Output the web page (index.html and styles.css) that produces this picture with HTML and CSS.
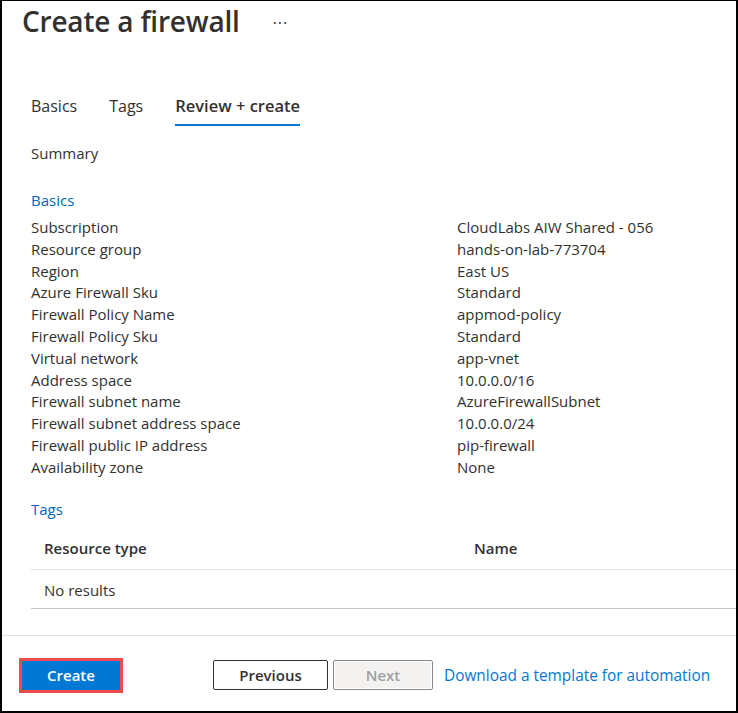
FILE: index.html
```html
<!DOCTYPE html>
<html>
<head>
<meta charset="utf-8">
<link rel="stylesheet" href="styles.css">
</head>
<body>
<div class="frame">
  <div class="main">
    <div class="title-row">
      <h1 class="title">Create a firewall</h1>
      <span class="more">···</span>
    </div>
    <div class="tabs">
      <span class="tab">Basics</span>
      <span class="tab">Tags</span>
      <span class="tab active">Review + create</span>
    </div>
    <div class="summary">Summary</div>
    <div class="section-title">Basics</div>
    <div class="props">
      <div class="prop"><span class="k">Subscription</span><span class="v">CloudLabs AIW Shared - 056</span></div>
      <div class="prop"><span class="k">Resource group</span><span class="v">hands-on-lab-773704</span></div>
      <div class="prop"><span class="k">Region</span><span class="v">East US</span></div>
      <div class="prop"><span class="k">Azure Firewall Sku</span><span class="v">Standard</span></div>
      <div class="prop"><span class="k">Firewall Policy Name</span><span class="v">appmod-policy</span></div>
      <div class="prop"><span class="k">Firewall Policy Sku</span><span class="v">Standard</span></div>
      <div class="prop"><span class="k">Virtual network</span><span class="v">app-vnet</span></div>
      <div class="prop"><span class="k">Address space</span><span class="v">10.0.0.0/16</span></div>
      <div class="prop"><span class="k">Firewall subnet name</span><span class="v">AzureFirewallSubnet</span></div>
      <div class="prop"><span class="k">Firewall subnet address space</span><span class="v">10.0.0.0/24</span></div>
      <div class="prop"><span class="k">Firewall public IP address</span><span class="v">pip-firewall</span></div>
      <div class="prop"><span class="k">Availability zone</span><span class="v">None</span></div>
    </div>
    <div class="section-title tags-title">Tags</div>
    <div class="grid">
      <div class="grow head"><span class="c1">Resource type</span><span class="c2">Name</span></div>
      <div class="grow body-row"><span class="c1">No results</span></div>
    </div>
  </div>
  <div class="footer">
    <div class="create-wrap"><button class="btn primary">Create</button></div>
    <button class="btn prev">Previous</button>
    <button class="btn next" disabled>Next</button>
    <a class="link" href="#">Download a template for automation</a>
  </div>
</div>
</body>
</html>
```
FILE: styles.css
```css
* { box-sizing: border-box; }
html, body { margin: 0; padding: 0; background: #fff; }
body {
  font-family: "Open Sans", "Noto Sans", sans-serif;
  color: #323130;
}
.frame {
  width: 738px;
  height: 713px;
  border-left: 2px solid #000;
  border-top: 1px solid #000;
  border-right: 2px solid #000;
  border-bottom: 2px solid #000;
  display: flex;
  flex-direction: column;
  overflow: hidden;
}
.main {
  flex: 1;
  padding-left: 29px;
}
.title-row {
  display: flex;
  align-items: center;
  margin-left: -9px;
  height: 40px;
}
.title {
  margin: 0;
  font-size: 28px;
  font-weight: 600;
  line-height: 40px;
  letter-spacing: -0.2px;
}
.more {
  margin-left: 33px;
  margin-top: 3px;
  font-size: 16px;
  letter-spacing: 1px;
  color: #323130;
}
.tabs {
  display: flex;
  gap: 32px;
  margin-top: 51px;
  height: 35px;
}
.tab {
  font-size: 16px;
  line-height: 28px;
  height: 34px;
}
.tab.active {
  font-weight: 600;
  font-size: 16.5px;
  border-bottom: 2px solid #0078d4;
}
.summary {
  font-size: 15px;
  line-height: 20px;
  margin-top: 16px;
}
.section-title {
  font-size: 15px;
  line-height: 20px;
  color: #0067b8;
  margin-top: 27px;
}
.props {
  margin-top: 7px;
}
.prop {
  display: flex;
  font-size: 15px;
  line-height: 21.8px;
  height: 21.8px;
}
.k { width: 426px; }
.tags-title { margin-top: 20px; }
.grid {
  margin-top: 8px;
  margin-right: -1px;
}
.grow {
  display: flex;
  font-size: 15px;
  height: 40px;
  align-items: center;
  border-bottom: 1px solid #e1dfdd;
  padding-left: 13px;
}
.grow.head { font-weight: 600; height: 43px; padding-top: 1px; }
.grow.body-row {
  height: 39px;
  padding-top: 2px;
  border-bottom-color: #c8c6c4;
}
.c1 { width: 430px; }
.footer {
  border-top: 1px solid #e1dfdd;
  height: 76px;
  display: flex;
  align-items: center;
  padding-left: 17px;
  padding-top: 3px;
}
.create-wrap {
  border: 3px solid #f04a4f;
  padding: 0;
  margin-right: 90px;
}
.btn {
  font-family: inherit;
  font-size: 15px;
  font-weight: 600;
  height: 29px;
  border-radius: 2px;
  padding: 0;
  cursor: pointer;
}
.primary {
  display: block;
  width: 98px;
  background: #0078d4;
  color: #fff;
  border: none;
  border-radius: 0;
}
.prev {
  width: 115px;
  background: #fff;
  color: #323130;
  border: 1px solid #323130;
  margin-right: 5px;
  height: 30px;
}
.next {
  width: 100px;
  height: 30px;
  background: #f3f2f1;
  color: #a19f9d;
  border: 1px solid #8a8886;
  box-shadow: inset 0 0 0 1px #fff;
  margin-right: 11px;
}
.link {
  font-size: 15.4px;
  color: #0078d4;
  text-decoration: none;
}
```
